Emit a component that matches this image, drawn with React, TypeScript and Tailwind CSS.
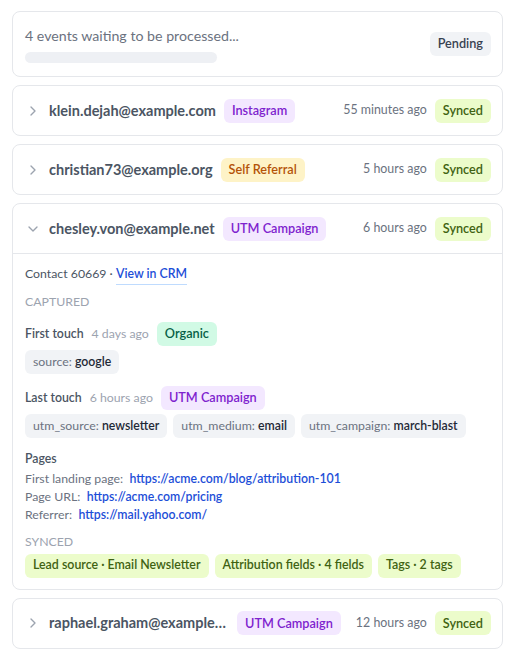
import React from "react";
import { ChevronRight, ChevronDown } from "lucide-react";

const font = { fontFamily: "Lato, 'Noto Sans', sans-serif" };

function Badge({ tone, children, small }: { tone: string; children: React.ReactNode; small?: boolean }) {
  const tones: Record<string, string> = {
    purple: "bg-[#f3e8ff] text-[#7e22ce]",
    amber: "bg-[#fef3c7] text-[#b45309]",
    lime: "bg-[#ecfccb] text-[#3f6212]",
    gray: "bg-[#f1f3f6] text-[#374151]",
    emerald: "bg-[#d1fae5] text-[#065f46]",
  };
  return (
    <span
      className={`inline-flex h-6 shrink-0 items-center whitespace-nowrap rounded-md px-2 font-semibold ${
        small ? "text-[12.4px]" : "text-[12.7px]"
      } ${tones[tone]}`}
    >
      {children}
    </span>
  );
}

function Row({
  email,
  source,
  tone,
  time,
  open,
}: {
  email: string;
  source: string;
  tone: string;
  time: string;
  open?: boolean;
}) {
  return (
    <div className="flex h-[49px] items-center gap-2 pl-3 pr-[11px]">
      {open ? (
        <ChevronDown className="h-4 w-4 shrink-0 text-[#9ca3af]" strokeWidth={2} />
      ) : (
        <ChevronRight className="h-4 w-4 shrink-0 text-[#9ca3af]" strokeWidth={2} />
      )}
      <span className="min-w-0 max-w-[180px] truncate text-[14.5px] font-bold text-[#4b5563]">{email}</span>
      <Badge tone={tone}>{source}</Badge>
      <span className="ml-auto whitespace-nowrap text-[12.4px] text-[#6b7280]">{time}</span>
      <Badge tone="lime">Synced</Badge>
    </div>
  );
}

function Chip({ k, v }: { k: string; v: string }) {
  return (
    <span className="inline-flex h-6 items-center whitespace-nowrap rounded-md bg-[#f1f3f6] px-2 text-[12.3px]">
      <span className="text-[#6b7280]">{k}:&nbsp;</span>
      <span className="font-semibold text-[#1f2937]">{v}</span>
    </span>
  );
}

export default function App() {
  return (
    <div className="min-h-screen bg-white pl-3 pr-[18px] pt-[11px] pb-3" style={font}>
      <div className="flex flex-col gap-2">
        <div className="flex h-[66px] items-center rounded-lg border border-[#e5e7eb] pl-3 pr-[11px]">
          <div className="flex flex-1 flex-col gap-[6px]">
            <span className="text-[14.2px] text-[#6b7280]">4 events waiting to be processed...</span>
            <div className="h-[11px] w-[192px] rounded-full bg-[#eef0f4]" />
          </div>
          <Badge tone="gray">Pending</Badge>
        </div>

        <div className="rounded-lg border border-[#e5e7eb]">
          <Row email="klein.dejah@example.com" source="Instagram" tone="purple" time="55 minutes ago" />
        </div>
        <div className="rounded-lg border border-[#e5e7eb]">
          <Row email="christian73@example.org" source="Self Referral" tone="amber" time="5 hours ago" />
        </div>

        <div className="rounded-lg border border-[#e5e7eb]">
          <Row email="chesley.von@example.net" source="UTM Campaign" tone="purple" time="6 hours ago" open />
          <div className="border-t border-[#e5e7eb] px-3 pb-[11px] pt-[11px] text-[12.3px]">
            <div className="text-[#4b5563]">
              Contact 60669 ·{" "}
              <span className="border-b border-[#bfdbfe] pb-[3px] font-semibold text-[#1d4ed8]">View in CRM</span>
            </div>
            <div className="mt-[10px] uppercase text-[#9ca3af]">Captured</div>

            <div className="mt-[10px] flex items-center gap-2">
              <span className="font-semibold text-[#4b5563]">First touch</span>
              <span className="text-[#9ca3af]">4 days ago</span>
              <Badge tone="emerald">Organic</Badge>
            </div>
            <div className="mt-1 flex flex-wrap gap-[6px]">
              <Chip k="source" v="google" />
            </div>

            <div className="mt-3 flex items-center gap-2">
              <span className="font-semibold text-[#4b5563]">Last touch</span>
              <span className="text-[#9ca3af]">6 hours ago</span>
              <Badge tone="purple">UTM Campaign</Badge>
            </div>
            <div className="mt-1 flex flex-wrap gap-[6px]">
              <Chip k="utm_source" v="newsletter" />
              <Chip k="utm_medium" v="email" />
              <Chip k="utm_campaign" v="march-blast" />
            </div>

            <div className="mt-[12px] font-semibold text-[#4b5563]">Pages</div>
            <div className="mt-[2px] flex flex-col leading-[18px] text-[#6b7280]">
              <div>
                First landing page:&nbsp;{" "}
                <span className="font-semibold text-[#1d4ed8]">https://acme.com/blog/attribution-101</span>
              </div>
              <div>
                Page URL:&nbsp;{" "}
                <span className="font-semibold text-[#1d4ed8]">https://acme.com/pricing</span>
              </div>
              <div>
                Referrer:&nbsp;{" "}
                <span className="font-semibold text-[#1d4ed8]">https://mail.yahoo.com/</span>
              </div>
            </div>

            <div className="mt-[9px] uppercase text-[#9ca3af]">Synced</div>
            <div className="mt-[2px] flex flex-wrap gap-[6px]">
              <Badge tone="lime" small>Lead source · Email Newsletter</Badge>
              <Badge tone="lime" small>Attribution fields · 4 fields</Badge>
              <Badge tone="lime" small>Tags · 2 tags</Badge>
            </div>
          </div>
        </div>

        <div className="rounded-lg border border-[#e5e7eb]">
          <Row email="raphael.graham@example.com" source="UTM Campaign" tone="purple" time="12 hours ago" />
        </div>
      </div>
    </div>
  );
}
